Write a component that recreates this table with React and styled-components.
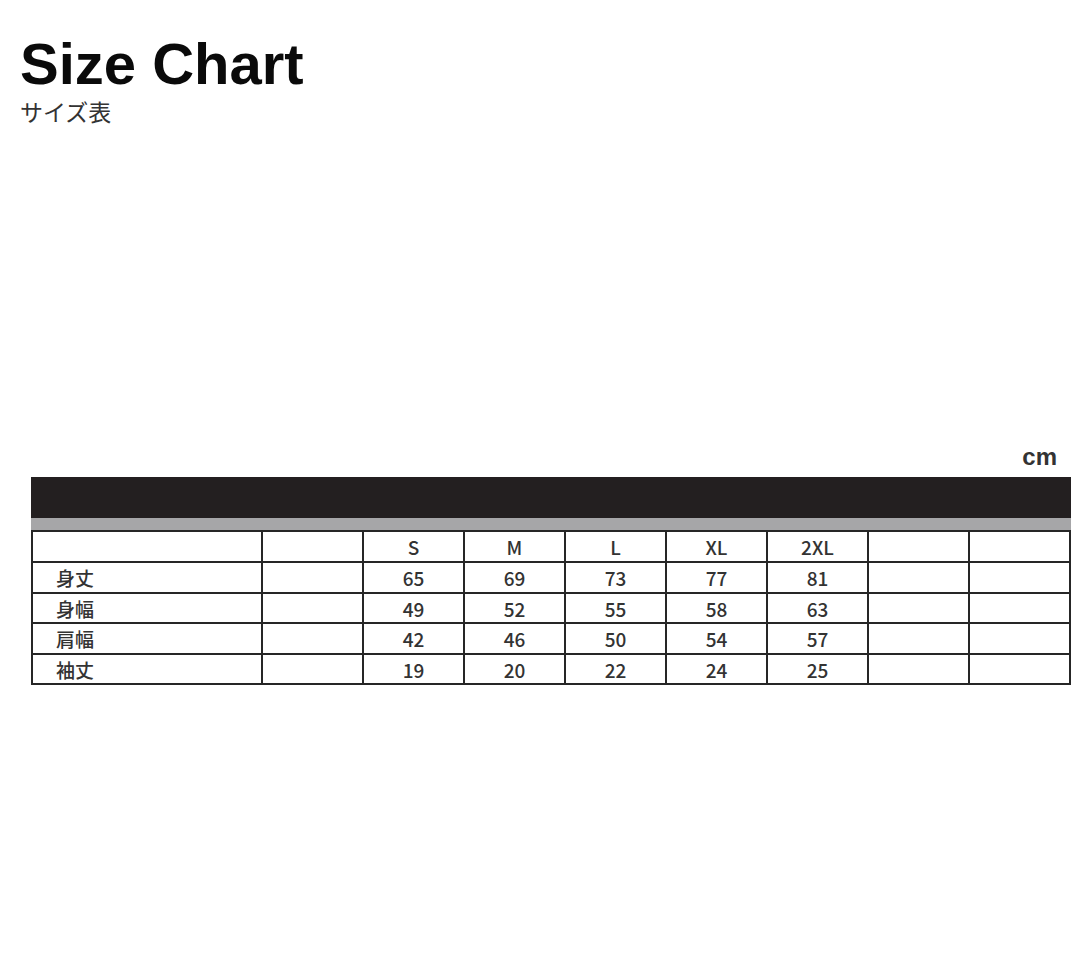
import React from "react";
import styled, { createGlobalStyle } from "styled-components";

const sizes = ["S", "M", "L", "XL", "2XL", "", ""];
const rows = [
  { label: "身丈", values: ["65", "69", "73", "77", "81", "", ""] },
  { label: "身幅", values: ["49", "52", "55", "58", "63", "", ""] },
  { label: "肩幅", values: ["42", "46", "50", "54", "57", "", ""] },
  { label: "袖丈", values: ["19", "20", "22", "24", "25", "", ""] },
];

const App = () => {
  return (
    <>
      <GlobalStyle />
      <Page>
        <Header>
          <Title>Size Chart</Title>
          <Subtitle>サイズ表</Subtitle>
        </Header>
        <ChartSection>
          <Unit>cm</Unit>
          <Band />
          <SubBand />
          <Grid>
            <Cell $label />
            <Cell />
            {sizes.map((s, i) => (
              <Cell key={"h" + i}>{s}</Cell>
            ))}
            {rows.map((row) => (
              <React.Fragment key={row.label}>
                <Cell $label>{row.label}</Cell>
                <Cell />
                {row.values.map((v, i) => (
                  <Cell key={row.label + i}>{v}</Cell>
                ))}
              </React.Fragment>
            ))}
          </Grid>
        </ChartSection>
      </Page>
    </>
  );
};

const GlobalStyle = createGlobalStyle`
  body {
    margin: 0;
    background: #fff;
    font-family: "Liberation Sans", Arial, sans-serif;
  }
`;

const Page = styled.div`
  width: 1091px;
  min-height: 975px;
  background: #fff;
`;

const Header = styled.header`
  padding: 35px 0 0 20px;
`;

const Title = styled.h1`
  margin: 0;
  font-family: "Liberation Sans", Arial, sans-serif;
  font-size: 58px;
  line-height: 1;
  font-weight: 700;
  color: #0a0a0a;
`;

const Subtitle = styled.div`
  margin-top: 5px;
  font-family: "Noto Sans CJK JP", sans-serif;
  font-size: 23px;
  line-height: 26px;
  color: #333;
`;

const ChartSection = styled.section`
  margin-top: 321px;
  padding: 0 20px 0 31px;
`;

const Unit = styled.div`
  text-align: right;
  padding-right: 14px;
  margin-bottom: 8px;
  font-family: "Liberation Sans", Arial, sans-serif;
  font-weight: 700;
  font-size: 24px;
  line-height: 1;
  color: #333;
`;

const Band = styled.div`
  height: 41px;
  background: #231f20;
`;

const SubBand = styled.div`
  height: 12px;
  background: #a6a6a8;
`;

const Grid = styled.div`
  display: grid;
  grid-template-columns: 228px 99px repeat(7, 99px);
  grid-template-rows: 29px 29px 28px 29px 28px;
  gap: 2px;
  padding: 2px;
  background: #262626;
`;

const Cell = styled.div`
  background: #fff;
  display: flex;
  align-items: center;
  justify-content: ${(p) => (p.$label ? "flex-start" : "center")};
  padding-left: ${(p) => (p.$label ? "23px" : "0")};
  font-family: "Noto Sans CJK JP", sans-serif;
  font-size: 19px;
  font-weight: 500;
  color: #333;
`;

export default App;
